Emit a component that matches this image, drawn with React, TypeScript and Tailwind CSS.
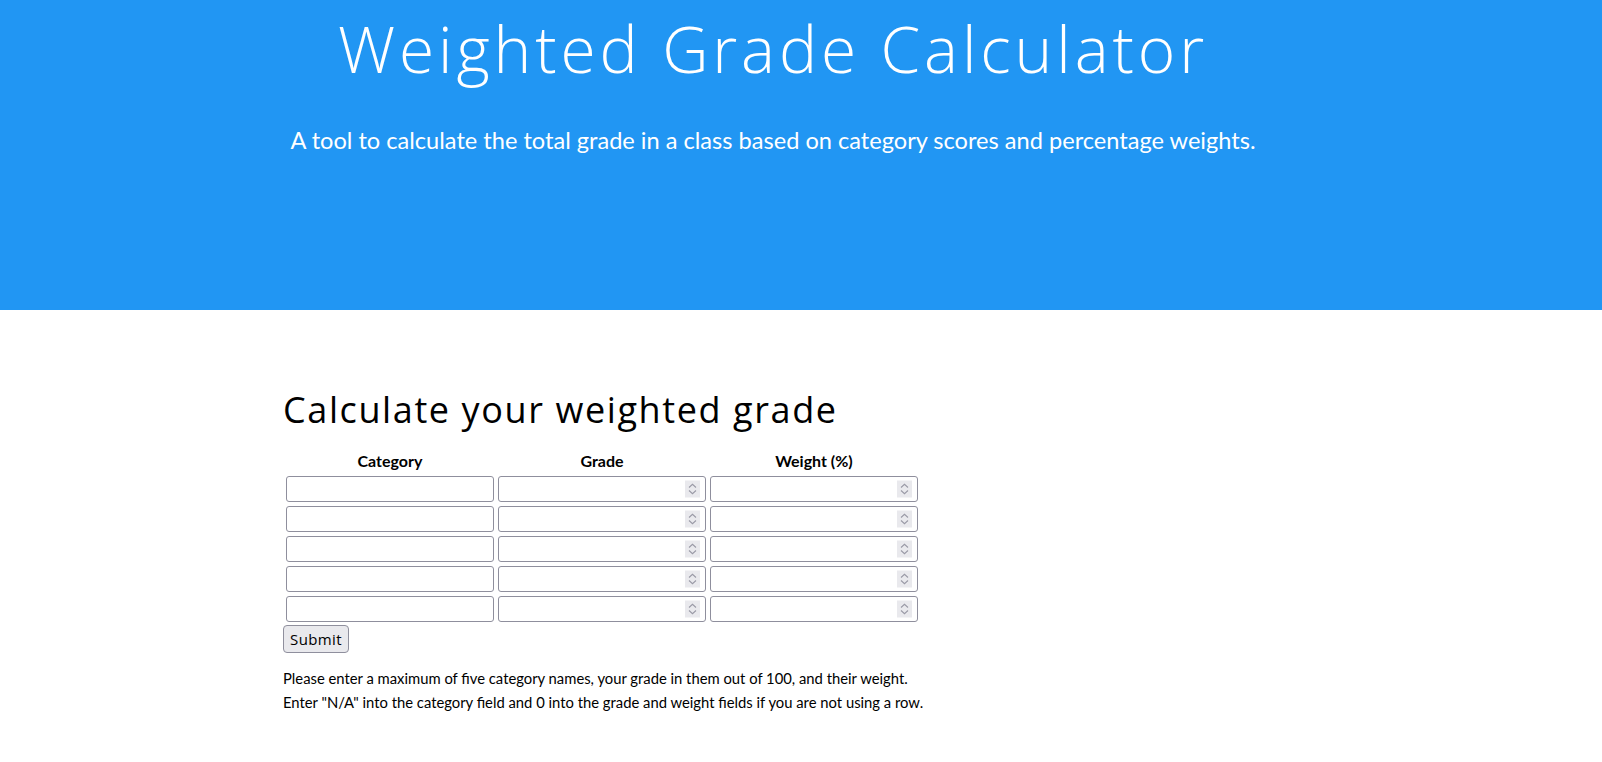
import React from "react";

function Spinner() {
  return (
    <div className="pointer-events-none absolute right-[6px] top-1/2 flex h-[17px] w-[15px] -translate-y-1/2 items-center justify-center bg-[#e9e9ed]">
      <svg width="15" height="17" viewBox="0 0 15 17" fill="none">
        <path d="M4 7 L7.5 3.8 L11 7" stroke="#9a9aa6" strokeWidth="1.1" />
        <path d="M4 10 L7.5 13.2 L11 10" stroke="#9a9aa6" strokeWidth="1.1" />
      </svg>
    </div>
  );
}

function Field({ numeric }: { numeric?: boolean }) {
  return (
    <div className="relative">
      <input
        type="text"
        inputMode={numeric ? "decimal" : "text"}
        className="block h-[26px] w-[208px] rounded-[3px] border border-[#8f8f9d] bg-white px-[4px] text-[13px] outline-none"
      />
      {numeric && <Spinner />}
    </div>
  );
}

export default function App() {
  const rows = [0, 1, 2, 3, 4];
  return (
    <div className="min-h-[762px] bg-white font-['Lato',sans-serif] text-black">
      <header className="h-[310px] bg-[#2196f3] pt-[17px]">
        <div className="ml-[223px] w-[1100px] text-center text-white">
          <h1 className="font-['Open_Sans',sans-serif] text-[64px] font-light leading-none tracking-[3.9px]">
            Weighted Grade Calculator
          </h1>
          <p className="mt-[45px] whitespace-nowrap text-[23.6px] leading-[1.2]">
            A tool to calculate the total grade in a class based on category scores and percentage weights.
          </p>
        </div>
      </header>
      <main className="ml-[283px] pt-[82px]">
        <h2 className="font-['Open_Sans',sans-serif] text-[36px] font-normal leading-none tracking-[1.6px]">
          Calculate your weighted grade
        </h2>
        <form className="mt-[18px]" onSubmit={(e) => e.preventDefault()}>
          <table className="border-separate border-spacing-[2px]">
            <thead>
              <tr>
                <th className="p-[1px] text-[16px] font-bold leading-[23px]">Category</th>
                <th className="p-[1px] text-[16px] font-bold leading-[23px]">Grade</th>
                <th className="p-[1px] text-[16px] font-bold leading-[23px]">Weight (%)</th>
              </tr>
            </thead>
            <tbody>
              {rows.map((r) => (
                <tr key={r}>
                  <td className="p-[1px]">
                    <Field />
                  </td>
                  <td className="p-[1px]">
                    <Field numeric />
                  </td>
                  <td className="p-[1px]">
                    <Field numeric />
                  </td>
                </tr>
              ))}
            </tbody>
          </table>
          <button
            type="submit"
            className="block h-[28px] rounded-[4px] border border-[#8f8f9d] bg-[#e9e9ed] px-[6px] font-['Open_Sans',sans-serif] text-[15px] leading-none tracking-[0.4px] text-black"
          >
            Submit
          </button>
        </form>
        <p className="mt-[13px] text-[14.8px] leading-[24px]">
          Please enter a maximum of five category names, your grade in them out of 100, and their weight.
          <br />
          Enter "N/A" into the category field and 0 into the grade and weight fields if you are not using a row.
        </p>
      </main>
    </div>
  );
}
